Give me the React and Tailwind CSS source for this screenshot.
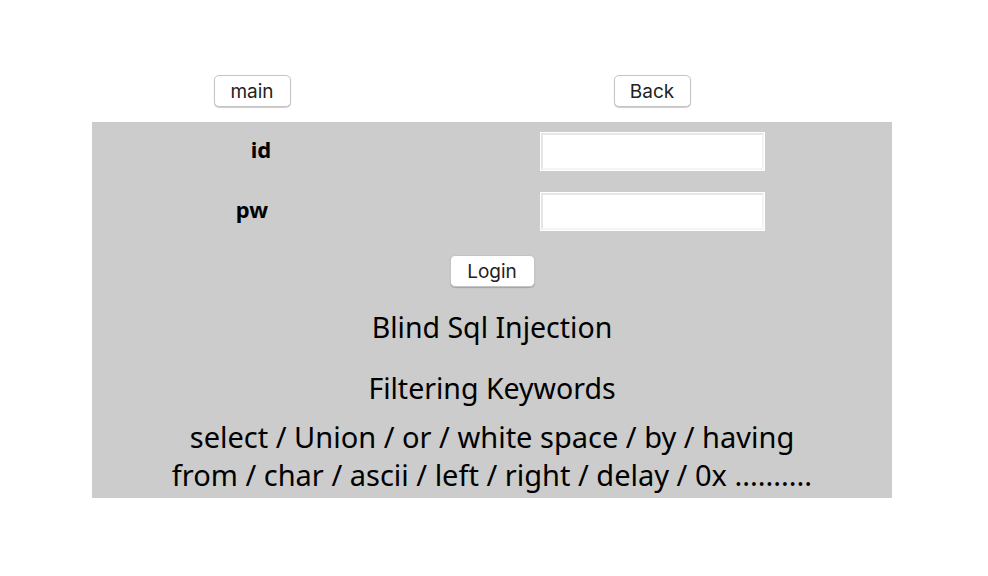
const btn =
  "h-[32px] px-[10px] rounded-[5px] bg-white border border-[#c4c4c4] shadow-[0_1px_1px_rgba(0,0,0,0.2)] text-[19px] text-[#222] leading-none font-['Inter',sans-serif]"

function Field() {
  return (
    <input
      type="text"
      className="w-[223px] h-[37px] bg-white border-2 border-t-[#e6e6e6] border-l-[#e6e6e6] border-b-[#f4f4f4] border-r-[#f4f4f4] outline outline-1 outline-white"
    />
  )
}

export default function App() {
  return (
    <div className="min-h-[576px] bg-white font-['Noto_Sans',sans-serif] text-black">
      <div className="pt-[75px] w-[800px] ml-[92px]">
        {/* top buttons, outside the gray box */}
        <div className="grid grid-cols-[320px_480px] h-[47px]">
          <div className="flex justify-center">
            <button className={`${btn} w-[77px]`}>main</button>
          </div>
          <div className="flex justify-center">
            <button className={`${btn} w-[77px]`}>Back</button>
          </div>
        </div>

        <div className="bg-[#cccccc] pb-[4px]">
          <div className="grid grid-cols-[320px_480px]">
            <div className="h-[59px] flex items-center justify-center pl-[18px] pb-[4px] text-[22px] font-bold">id</div>
            <div className="h-[59px] flex items-center justify-center">
              <Field />
            </div>
            <div className="h-[60px] flex items-center justify-center pb-[4px] text-[22px] font-bold">pw</div>
            <div className="h-[60px] flex items-center justify-center">
              <Field />
            </div>
          </div>

          <div className="h-[60px] flex items-center justify-center">
            <button className={`${btn} w-[85px]`}>Login</button>
          </div>
          <div className="h-[60px] flex items-center justify-center pb-[7px] text-[28.5px]">Blind Sql Injection</div>
          <div className="h-[60px] flex items-center justify-center pb-[6px] text-[28.5px]">Filtering Keywords</div>
          <div className="-mt-[3px] text-center text-[29px] leading-[38px]">
            <div>select / Union / or / white space / by / having</div>
            <div>from / char / ascii / left / right / delay / 0x ..........</div>
          </div>
        </div>
      </div>
    </div>
  )
}
